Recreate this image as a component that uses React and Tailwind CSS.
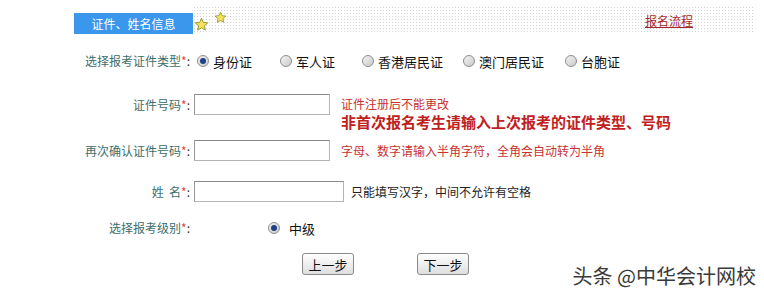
import React from 'react';

const Star = ({ size, className }) => (
  <svg width={size} height={size} viewBox="0 0 24 24" className={className}>
    <polygon
      points="12,2 14.9,8.6 22,9.3 16.6,14 18.2,21 12,17.3 5.8,21 7.4,14 2,9.3 9.1,8.6"
      fill="#f4e25a"
      stroke="#9c9a3a"
      strokeWidth="1.6"
      strokeLinejoin="round"
    />
  </svg>
);

const Radio = ({ checked }) => (
  <span className="w-[12px] h-[12px] rounded-full border border-[#8d8d8d] bg-gradient-to-br from-[#f4f4f4] to-[#c9c9c9] flex items-center justify-center shrink-0">
    {checked && <span className="w-[6px] h-[6px] rounded-full bg-[#1f3f86]" />}
  </span>
);

const Label = ({ children }) => (
  <div className="w-[190px] shrink-0 text-right text-[12px] text-[#3b6e6c]">
    {children}
    <span className="text-[#e0463c]">*</span>
    <span className="text-[#333]">:</span>
  </div>
);

const Input = ({ w }) => (
  <div className={`h-[21px] ${w} border border-[#b5b5b5] border-t-[#8a8a8a] border-l-[#999] bg-white shrink-0`} />
);

const idTypes = [
  { label: '身份证', w: 'w-[83px]', checked: true },
  { label: '军人证', w: 'w-[82px]' },
  { label: '香港居民证', w: 'w-[101px]' },
  { label: '澳门居民证', w: 'w-[102px]' },
  { label: '台胞证', w: 'w-[60px]' },
];

export default function App() {
  return (
    <div
      className="relative w-[764px] h-[300px] bg-white overflow-hidden"
      style={{ fontFamily: '"Noto Sans CJK SC", "Noto Sans", sans-serif' }}
    >
      {/* header */}
      <div className="flex items-end ml-[74px] w-[681px] h-[34px] pt-[6px]">
        <div className="w-[119px] h-[21px] bg-[#3a97ec] text-white text-[12px] flex items-center justify-center shrink-0 leading-none">
          证件、姓名信息
        </div>
        <div className="flex-1 h-[28px] flex items-start bg-[radial-gradient(#d4d4d4_0.6px,transparent_0.7px)] bg-[size:3px_3px]">
          <Star size={15} className="mt-[11px] ml-[1px]" />
          <Star size={13} className="mt-[5px] ml-[5px]" />
          <a className="ml-auto mr-[62px] mt-[8px] text-[12px] leading-[14px] text-[#a3262b] underline">
            报名流程
          </a>
        </div>
      </div>

      {/* id type */}
      <div className="flex items-center h-[20px] mt-[17px]">
        <Label>选择报考证件类型</Label>
        <div className="flex items-center ml-[7px]">
          {idTypes.map((t) => (
            <div key={t.label} className={`flex items-center ${t.w}`}>
              <Radio checked={t.checked} />
              <span className="ml-[4px] text-[13px] text-[#111] leading-none">{t.label}</span>
            </div>
          ))}
        </div>
      </div>

      {/* id number */}
      <div className="flex items-start h-[40px] mt-[23px]">
        <div className="h-[21px] flex items-center">
          <Label>证件号码</Label>
        </div>
        <div className="ml-[4px]">
          <Input w="w-[136px]" />
        </div>
        <div className="ml-[11px] pt-[3px]">
          <div className="text-[12px] leading-[14px] text-[#c8322f]">证件注册后不能更改</div>
          <div className="mt-[2px] text-[15px] leading-[18px] font-bold text-[#c0201e]">
            非首次报名考生请输入上次报考的证件类型、号码
          </div>
        </div>
      </div>

      {/* confirm */}
      <div className="flex items-center h-[21px] mt-[6px]">
        <Label>再次确认证件号码</Label>
        <div className="ml-[4px]">
          <Input w="w-[136px]" />
        </div>
        <div className="ml-[11px] text-[12px] text-[#c8322f]">字母、数字请输入半角字符，全角会自动转为半角</div>
      </div>

      {/* name */}
      <div className="flex items-center h-[21px] mt-[20px]">
        <Label>姓&nbsp;&nbsp;名</Label>
        <div className="ml-[4px]">
          <Input w="w-[150px]" />
        </div>
        <div className="ml-[7px] text-[12px] text-[#222]">只能填写汉字，中间不允许有空格</div>
      </div>

      {/* level */}
      <div className="flex items-center h-[20px] mt-[16px]">
        <Label>选择报考级别</Label>
        <div className="ml-[78px] flex items-center">
          <Radio checked />
          <span className="ml-[9px] text-[13px] text-[#111] leading-none">中级</span>
        </div>
      </div>

      {/* buttons */}
      <div className="flex mt-[15px] ml-[302px] gap-[63px]">
        <button className="w-[52px] h-[22px] border border-[#8a8a8a] rounded-[3px] bg-gradient-to-b from-white to-[#dedede] text-[13px] text-[#111] leading-none">
          上一步
        </button>
        <button className="w-[52px] h-[22px] border border-[#8a8a8a] rounded-[3px] bg-gradient-to-b from-white to-[#dedede] text-[13px] text-[#111] leading-none">
          下一步
        </button>
      </div>

      {/* watermark */}
      <div className="absolute right-[8px] bottom-[14px] text-[20px] leading-none text-[#3a3a3a] [text-shadow:0_0_2px_#fff,1px_1px_1px_#fff]">
        头条 @中华会计网校
      </div>
    </div>
  );
}
